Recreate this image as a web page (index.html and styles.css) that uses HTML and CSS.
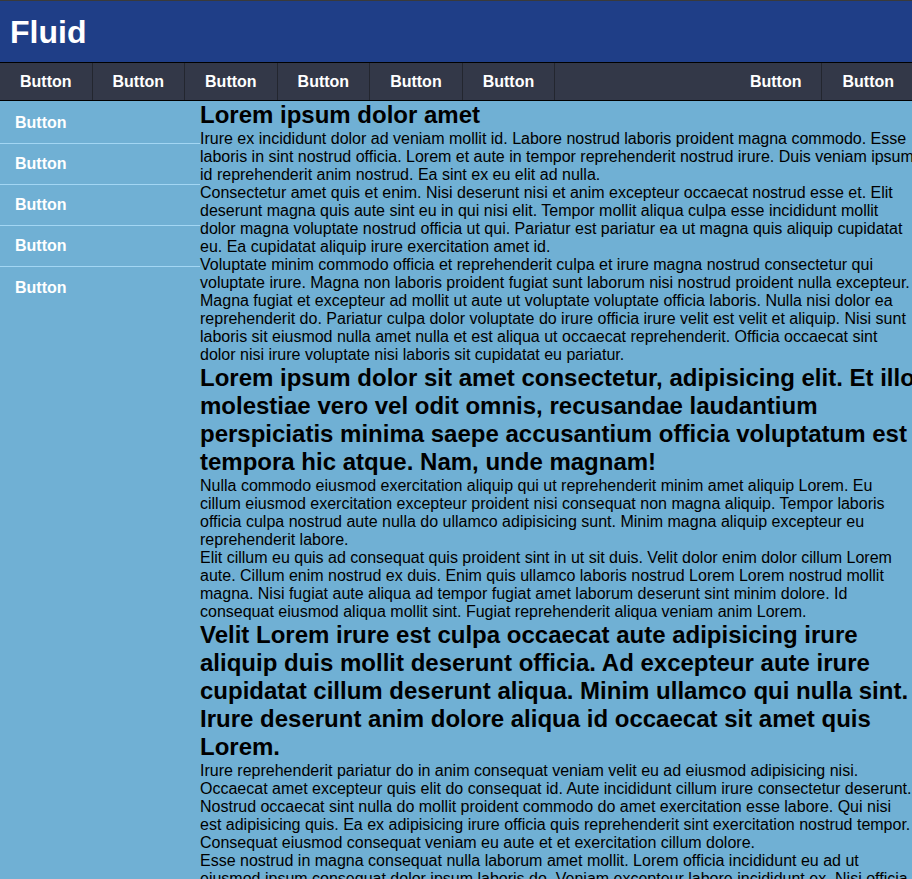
FILE: index.html
```html
<!DOCTYPE html>
<html lang="en">
<head>
<meta charset="utf-8">
<title>Fluid</title>
<link rel="stylesheet" href="styles.css">
</head>
<body>
<div class="page">
  <header class="topbar">
    <h1 class="brand">Fluid</h1>
  </header>
  <nav class="navbar">
    <div class="nav-group">
      <button class="nav-btn">Button</button>
      <button class="nav-btn">Button</button>
      <button class="nav-btn">Button</button>
      <button class="nav-btn">Button</button>
      <button class="nav-btn">Button</button>
      <button class="nav-btn">Button</button>
    </div>
    <div class="nav-group">
      <button class="nav-btn">Button</button>
      <button class="nav-btn">Button</button>
    </div>
  </nav>
  <div class="layout">
    <aside class="sidebar">
      <button class="side-btn">Button</button>
      <button class="side-btn">Button</button>
      <button class="side-btn">Button</button>
      <button class="side-btn">Button</button>
      <button class="side-btn">Button</button>
    </aside>
    <main class="content">
      <h2 class="title">Lorem ipsum dolor amet</h2>
      <p class="text">Irure ex incididunt dolor ad veniam mollit id. Labore nostrud laboris proident magna commodo. Esse laboris in sint nostrud officia. Lorem et aute in tempor reprehenderit nostrud irure. Duis veniam ipsum id reprehenderit anim nostrud. Ea sint ex eu elit ad nulla.</p>
      <p class="text">Consectetur amet quis et enim. Nisi deserunt nisi et anim excepteur occaecat nostrud esse et. Elit deserunt magna quis aute sint eu in qui nisi elit. Tempor mollit aliqua culpa esse incididunt mollit dolor magna voluptate nostrud officia ut qui. Pariatur est pariatur ea ut magna quis aliquip cupidatat eu. Ea cupidatat aliquip irure exercitation amet id.</p>
      <p class="text">Voluptate minim commodo officia et reprehenderit culpa et irure magna nostrud consectetur qui voluptate irure. Magna non laboris proident fugiat sunt laborum nisi nostrud proident nulla excepteur. Magna fugiat et excepteur ad mollit ut aute ut voluptate voluptate officia laboris. Nulla nisi dolor ea reprehenderit do. Pariatur culpa dolor voluptate do irure officia irure velit est velit et aliquip. Nisi sunt laboris sit eiusmod nulla amet nulla et est aliqua ut occaecat reprehenderit. Officia occaecat sint dolor nisi irure voluptate nisi laboris sit cupidatat eu pariatur.</p>
      <h2 class="title">Lorem ipsum dolor sit amet consectetur, adipisicing elit. Et illo molestiae vero vel odit omnis, recusandae laudantium perspiciatis minima saepe accusantium officia voluptatum est tempora hic atque. Nam, unde magnam!</h2>
      <p class="text">Nulla commodo eiusmod exercitation aliquip qui ut reprehenderit minim amet aliquip Lorem. Eu cillum eiusmod exercitation excepteur proident nisi consequat non magna aliquip. Tempor laboris officia culpa nostrud aute nulla do ullamco adipisicing sunt. Minim magna aliquip excepteur eu reprehenderit labore.</p>
      <p class="text">Elit cillum eu quis ad consequat quis proident sint in ut sit duis. Velit dolor enim dolor cillum Lorem aute. Cillum enim nostrud ex duis. Enim quis ullamco laboris nostrud Lorem Lorem nostrud mollit magna. Nisi fugiat aute aliqua ad tempor fugiat amet laborum deserunt sint minim dolore. Id consequat eiusmod aliqua mollit sint. Fugiat reprehenderit aliqua veniam anim Lorem.</p>
      <h2 class="title">Velit Lorem irure est culpa occaecat aute adipisicing irure aliquip duis mollit deserunt officia. Ad excepteur aute irure cupidatat cillum deserunt aliqua. Minim ullamco qui nulla sint. Irure deserunt anim dolore aliqua id occaecat sit amet quis Lorem.</h2>
      <p class="text">Irure reprehenderit pariatur do in anim consequat veniam velit eu ad eiusmod adipisicing nisi. Occaecat amet excepteur quis elit do consequat id. Aute incididunt cillum irure consectetur deserunt. Nostrud occaecat sint nulla do mollit proident commodo do amet exercitation esse labore. Qui nisi est adipisicing quis. Ea ex adipisicing irure officia quis reprehenderit sint exercitation nostrud tempor. Consequat eiusmod consequat veniam eu aute et et exercitation cillum dolore.</p>
      <p class="text">Esse nostrud in magna consequat nulla laborum amet mollit. Lorem officia incididunt eu ad ut eiusmod ipsum consequat dolor ipsum laboris do. Veniam excepteur labore incididunt ex. Nisi officia magna sunt aliquip velit dolore cupidatat. Ullamco eiusmod ea cillum sint fugiat nisi culpa. Adipisicing labore irure voluptate deserunt ipsum consectetur.</p>
    </main>
  </div>
</div>
</body>
</html>
```

FILE: styles.css
```css
* {
  margin: 0;
  padding: 0;
  box-sizing: border-box;
}

html,
body {
  overflow: hidden;
}

body {
  background: #70b0d4;
  font-family: "Liberation Sans", Arial, sans-serif;
  font-size: 16px;
  color: #000;
}

.page {
  width: 920px;
}

.topbar {
  width: 915px;
  height: 63px;
  background: #1f3e87;
  border-top: 1px solid #3a3a3a;
  border-bottom: 1px solid #000;
  display: flex;
  align-items: center;
  padding: 2px 0 0 10px;
}

.brand {
  color: #fff;
  font-size: 32px;
  font-weight: bold;
}

.navbar {
  width: 915px;
  background: #333848;
  border-bottom: 1px solid #000;
  display: flex;
  justify-content: space-between;
}

.nav-group {
  display: flex;
}

.nav-btn,
.side-btn {
  font: inherit;
  font-weight: bold;
  color: #fff;
  background: none;
  border: none;
  text-align: left;
  cursor: pointer;
}

.nav-btn {
  padding: 10px 20px 9px;
  line-height: 18px;
  border-right: 1px solid #23262f;
}

.layout {
  display: grid;
  grid-template-columns: 200px 716.5px;
}

.sidebar {
  display: flex;
  flex-direction: column;
  padding-top: 2px;
}

.side-btn {
  height: 41px;
  padding: 0 15px;
  line-height: 40px;
  border-bottom: 1px solid #a3d6f3;
}

.side-btn:last-child {
  border-bottom: none;
}

.content {
  min-width: 0;
}

.title {
  font-size: 24px;
  font-weight: bold;
  line-height: 28px;
}

.text {
  line-height: 18px;
}

.title + .text {
  margin-top: 1px;
}
```
